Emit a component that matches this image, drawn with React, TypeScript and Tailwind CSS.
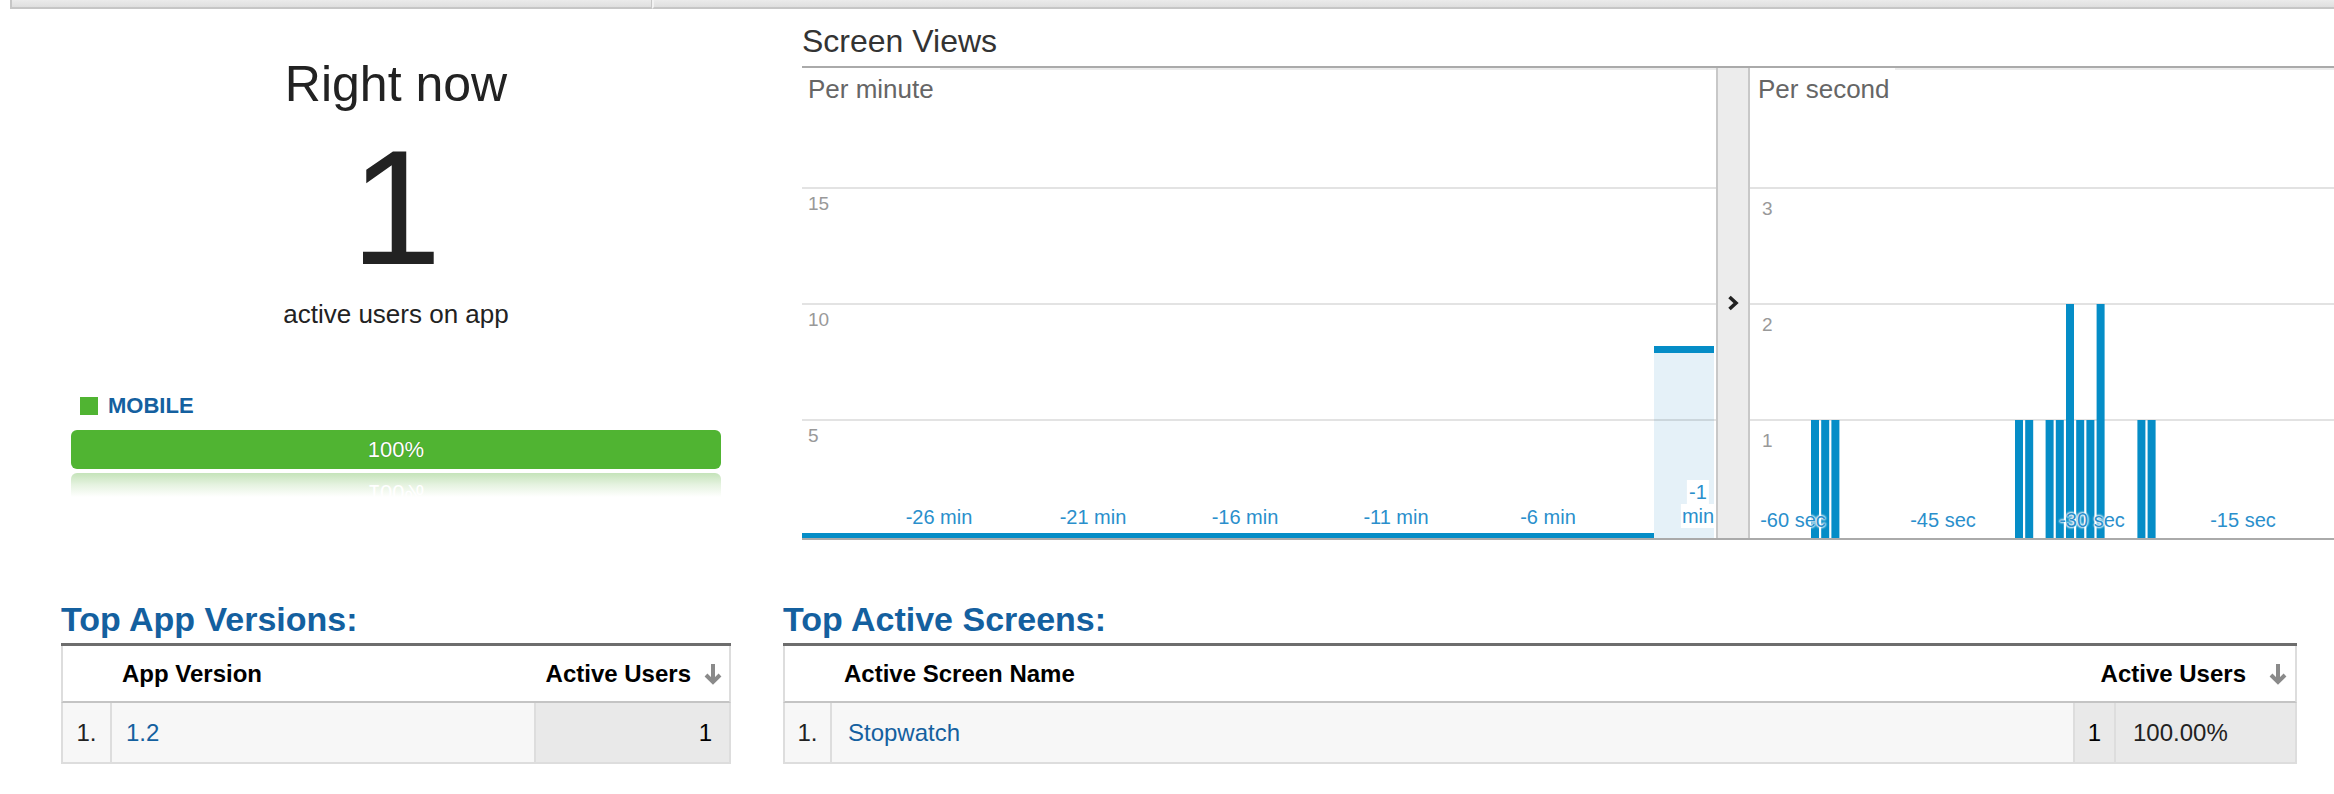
import React from "react";

const secBars: [number, number][] = [
  [0, 1], [1, 1], [2, 1], [20, 1], [21, 1], [23, 1], [24, 1], [25, 2], [26, 1], [27, 1], [28, 2], [32, 1], [33, 1],
];

function SortArrow() {
  return (
    <svg width="20" height="22" viewBox="0 0 20 22" className="shrink-0">
      <path d="M10 1 V19" stroke="#8a8a8a" strokeWidth="4" fill="none" />
      <path d="M3 12 L10 19 L17 12" stroke="#8a8a8a" strokeWidth="4" fill="none" />
    </svg>
  );
}

function MinuteChart() {
  const minLabels = [
    { t: "-26 min", x: 137 },
    { t: "-21 min", x: 291 },
    { t: "-16 min", x: 443 },
    { t: "-11 min", x: 594 },
    { t: "-6 min", x: 746 },
  ];
  return (
    <div className="relative w-[914px] h-[470px] overflow-hidden">
      <svg className="absolute inset-0" width="914" height="470">
        <rect x="138" y="0" width="776" height="2" fill="#ececec" />
        <rect x="852" y="285" width="60" height="185" fill="#e5f1f8" />
        <rect x="852" y="278" width="60" height="7" fill="#058dc7" />
        <rect x="0" y="465" width="852" height="5" fill="#058dc7" />
        {[120, 236, 352].map((y) => (
          <rect key={y} x="0" y={y - 1} width="914" height="2" fill="#000" fillOpacity="0.11" />
        ))}
      </svg>
      <div className="absolute left-[6px] top-[6px] text-[26px] leading-[30px] text-[#666]">Per minute</div>
      {[
        { t: "15", y: 126 },
        { t: "10", y: 242 },
        { t: "5", y: 358 },
      ].map((l) => (
        <div key={l.t} className="absolute left-[6px] text-[19px] leading-[19px] text-[#999]" style={{ top: l.y }}>
          {l.t}
        </div>
      ))}
      {minLabels.map((l) => (
        <div
          key={l.t}
          className="absolute top-[439px] -translate-x-1/2 whitespace-nowrap text-[20px] leading-[20px] text-[#2a8fcc]"
          style={{ left: l.x }}
        >
          {l.t}
        </div>
      ))}
      <div className="absolute left-[896px] top-[412px] -translate-x-1/2 flex flex-col items-center text-[20px] leading-[24px] text-[#2a8fcc]">
        <span className="bg-white px-[2px]">-1</span>
        <span className="bg-white px-[1px]">min</span>
      </div>
    </div>
  );
}

function SecondChart() {
  const secLabels = [
    { t: "-60 sec", x: 43 },
    { t: "-45 sec", x: 193 },
    { t: "-30 sec", x: 342 },
    { t: "-15 sec", x: 493 },
  ];
  return (
    <div className="relative w-[584px] h-[470px] overflow-hidden">
      <svg className="absolute inset-0" width="584" height="470">
        <rect x="145" y="0" width="439" height="2" fill="#ececec" />
        {[120, 236, 352].map((y) => (
          <rect key={y} x="0" y={y - 1} width="584" height="2" fill="#e2e2e2" />
        ))}
        {secBars.map(([i, v]) => {
          const x = 61 + i * 10.2;
          const top = v === 2 ? 236 : 352;
          return <rect key={i} x={x} y={top} width="8" height={470 - top} fill="#058dc7" />;
        })}
      </svg>
      <div className="absolute left-[8px] top-[6px] text-[26px] leading-[30px] text-[#666]">Per second</div>
      {[
        { t: "3", y: 131 },
        { t: "2", y: 247 },
        { t: "1", y: 363 },
      ].map((l) => (
        <div key={l.t} className="absolute left-[12px] text-[19px] leading-[19px] text-[#999]" style={{ top: l.y }}>
          {l.t}
        </div>
      ))}
      {secLabels.map((l) => (
        <div
          key={l.t}
          className="absolute top-[442px] -translate-x-1/2 whitespace-nowrap text-[20px] leading-[20px] text-[#2a8fcc] [text-shadow:0_0_2px_#fff,0_0_2px_#fff,0_0_3px_#fff,0_0_3px_#fff]"
          style={{ left: l.x }}
        >
          {l.t}
        </div>
      ))}
    </div>
  );
}

export default function App() {
  return (
    <div className="w-[2334px] h-[794px] overflow-hidden bg-white text-[#222] font-['Liberation_Sans',Arial,sans-serif]">
      {/* top strip */}
      <div className="flex h-[9px]">
        <div className="ml-[10px] w-[642px] border-l-2 border-b-2 border-r border-[#c6c6c6] bg-gradient-to-b from-[#ebebeb] to-[#dfdfdf]" />
        <div className="flex-1 border-l-2 border-l-[#f2f2f2] border-b-2 border-b-[#c6c6c6] bg-gradient-to-b from-[#ebebeb] to-[#dfdfdf]" />
      </div>

      {/* main row */}
      <div className="flex">
        {/* left summary */}
        <div className="w-[792px] flex flex-col items-center">
          <div className="mt-[47px] text-[50px] leading-[56px] text-[#222]">Right now</div>
          <div className="mt-[14px] text-[164px] leading-[164px] text-[#222]">1</div>
          <div className="mt-[9px] text-[26px] leading-[30px] text-[#222]">active users on app</div>
          <div className="self-stretch px-[71px]">
            <div className="mt-[66px] flex h-[22px] items-center pl-[9px] gap-[10px]">
              <div className="w-[18px] h-[18px] bg-[#50b432]" />
              <span className="text-[22px] leading-[22px] font-bold text-[#14609f]">MOBILE</span>
            </div>
            <div className="mt-[13px] h-[39px] rounded-[6px] bg-[#50b432] text-center text-[22px] leading-[39px] text-white [text-shadow:0_0_1px_rgba(0,0,0,0.35)]">
              100%
            </div>
            <div className="mt-[4px] h-[24px] overflow-hidden rounded-t-[6px] bg-gradient-to-b from-[#c4e3b9] via-[#e6f3e1] to-white">
              <div className="-scale-y-100 h-[39px] text-center text-[22px] leading-[39px] text-white">100%</div>
            </div>
          </div>
        </div>

        {/* chart area */}
        <div className="ml-[10px] w-[1532px] flex flex-col">
          <div className="mt-[12px] h-[45px] text-[32px] leading-[40px] text-[#333] border-b-2 border-[#aaaaaa] box-content">
            Screen Views
          </div>
          <div className="flex border-b-2 border-[#aaaaaa]">
            <MinuteChart />
            <div className="w-[34px] h-[470px] border-l-2 border-r-2 border-[#c8c8c8] bg-[#ececec] flex justify-center">
              <svg width="12" height="16" viewBox="0 0 12 16" className="mt-[227px]">
                <path d="M2.5 2 L9 8 L2.5 14" stroke="#222" strokeWidth="3.6" fill="none" />
              </svg>
            </div>
            <SecondChart />
          </div>
        </div>
      </div>

      {/* tables */}
      <div className="flex mt-[59px]">
        <div className="ml-[61px] w-[670px]">
          <div className="h-[40px] mb-[4px] text-[34px] leading-[40px] font-bold text-[#14609f]">Top App Versions:</div>
          <div className="border-t-[3px] border-[#6d6d6d]">
            <div className="flex h-[57px] items-center border-x-2 border-b-2 border-x-[#dddddd] border-b-[#c4c4c4] bg-white text-[24px] font-bold text-black">
              <div className="w-[49px]" />
              <div className="flex-1 pl-[10px]">App Version</div>
              <div className="flex items-center gap-[12px] pr-[6px]">
                <span>Active Users</span>
                <SortArrow />
              </div>
            </div>
            <div className="flex h-[61px] border-x-2 border-b-2 border-[#dddddd] text-[24px] leading-[59px]">
              <div className="w-[49px] border-r-2 border-[#dddddd] bg-[#f7f7f7] text-center text-[#222]">1.</div>
              <div className="flex-1 bg-[#f7f7f7] pl-[14px] text-[#14609f]">1.2</div>
              <div className="w-[195px] border-l-2 border-[#dddddd] bg-[#e9e9e9] pr-[17px] text-right text-black">1</div>
            </div>
          </div>
        </div>

        <div className="ml-[52px] w-[1514px]">
          <div className="h-[40px] mb-[4px] text-[34px] leading-[40px] font-bold text-[#14609f]">Top Active Screens:</div>
          <div className="border-t-[3px] border-[#6d6d6d]">
            <div className="flex h-[57px] items-center border-x-2 border-b-2 border-x-[#dddddd] border-b-[#c4c4c4] bg-white text-[24px] font-bold text-black">
              <div className="w-[47px]" />
              <div className="flex-1 pl-[12px]">Active Screen Name</div>
              <div className="flex items-center gap-[22px] pr-[7px]">
                <span>Active Users</span>
                <SortArrow />
              </div>
            </div>
            <div className="flex h-[61px] border-x-2 border-b-2 border-[#dddddd] text-[24px] leading-[59px]">
              <div className="w-[47px] border-r-2 border-[#dddddd] bg-[#f7f7f7] text-center text-[#222]">1.</div>
              <div className="flex-1 bg-[#f7f7f7] pl-[16px] text-[#14609f]">Stopwatch</div>
              <div className="w-[41px] border-l-2 border-[#dddddd] bg-[#e9e9e9] text-center text-black">1</div>
              <div className="w-[181px] border-l-2 border-[#dddddd] bg-[#e9e9e9] pl-[17px] text-[#222]">100.00%</div>
            </div>
          </div>
        </div>
      </div>
    </div>
  );
}
